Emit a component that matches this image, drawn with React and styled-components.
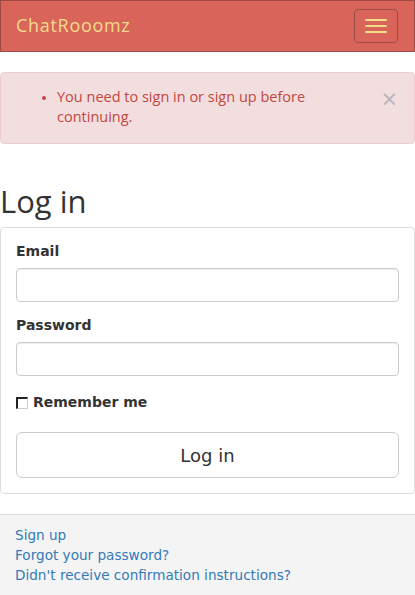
import React from "react";
import styled, { createGlobalStyle } from "styled-components";

const GlobalStyle = createGlobalStyle`
  html, body {
    margin: 0;
    padding: 0;
    background: #fff;
  }
  body {
    font-family: "DejaVu Sans", Verdana, sans-serif;
    font-size: 14px;
    line-height: 1.42857;
    color: #333;
  }
  * {
    box-sizing: border-box;
  }
`;

const Navbar = styled.nav`
  height: 52px;
  background-color: #d9645a;
  border: 1px solid #a04a44;
  display: flex;
  align-items: center;
  justify-content: space-between;
  padding: 0 16px 0 15px;
`;

const Brand = styled.a`
  font-family: "Open Sans", sans-serif;
  font-size: 18px;
  color: #f3dc8a;
  text-decoration: none;
  letter-spacing: 0.7px;
`;

const Toggle = styled.button`
  width: 44px;
  height: 34px;
  border: 1px solid #9b4c46;
  border-radius: 4px;
  background: transparent;
  display: flex;
  flex-direction: column;
  align-items: center;
  justify-content: center;
  gap: 4px;
  padding: 0;
  cursor: pointer;
`;

const Bar = styled.span`
  display: block;
  width: 22px;
  height: 2px;
  background: #f3dc8a;
  border-radius: 1px;
`;

const Alert = styled.div`
  margin-top: 20px;
  background-color: #f2dede;
  border: 1px solid #ebccd1;
  border-radius: 4px;
  color: #c4473f;
  display: flex;
  align-items: flex-start;
  padding: 14px 14px 14px 0;
  min-height: 72px;
`;

const AlertList = styled.ul`
  flex: 1;
  margin: 0;
  padding-left: 56px;
  font-family: "Open Sans", sans-serif;
  font-size: 14.5px;
  line-height: 20px;

  li::marker {
    font-size: 12px;
  }
`;

const Close = styled.button`
  border: none;
  background: transparent;
  color: #b5b5b5;
  font-size: 21px;
  line-height: 1;
  padding: 0;
  margin: 2px 2px 0 20px;
  font-family: "DejaVu Sans", sans-serif;
  cursor: pointer;
`;

const Title = styled.h2`
  font-family: "Open Sans", sans-serif;
  font-weight: 400;
  font-size: 31px;
  color: #333;
  margin: 40px 0 9px;
  line-height: 1.1;
`;

const Card = styled.form`
  border: 1px solid #ddd;
  border-radius: 4px;
  padding: 14px 15px 15px;
  display: flex;
  flex-direction: column;
`;

const Label = styled.label`
  font-weight: bold;
  font-size: 14px;
  display: block;
  margin-bottom: 6px;
`;

const Field = styled.div`
  margin-bottom: 14px;
`;

const Input = styled.input`
  display: block;
  width: 100%;
  height: 34px;
  border: 1px solid #ccc;
  border-radius: 4px;
  box-shadow: inset 0 1px 1px rgba(0, 0, 0, 0.075);
  padding: 6px 12px;
  font-size: 14px;
`;

const CheckRow = styled.label`
  display: flex;
  align-items: center;
  font-weight: bold;
  font-size: 14px;
  margin: 3px 0 19px;
`;

const Box = styled.span`
  width: 12px;
  height: 12px;
  border-top: 2px solid #222;
  border-left: 2px solid #222;
  border-right: 1px solid #ccc;
  border-bottom: 1px solid #ccc;
  margin-right: 5px;
  background: #fff;
`;

const Submit = styled.button`
  width: 100%;
  height: 46px;
  border: 1px solid #ccc;
  border-radius: 6px;
  background: #fff;
  color: #333;
  font-family: "DejaVu Sans", sans-serif;
  font-size: 18px;
  cursor: pointer;
`;

const Footer = styled.footer`
  margin-top: 20px;
  background: #f4f4f4;
  border-top: 1px solid #ddd;
  padding: 10px 15px 12px;
  display: flex;
  flex-direction: column;
`;

const FooterLink = styled.a`
  color: #337ab7;
  text-decoration: none;
  font-size: 13.6px;
  line-height: 20px;
`;

export default function App() {
  return (
    <>
      <GlobalStyle />
      <Navbar>
        <Brand href="#">ChatRooomz</Brand>
        <Toggle type="button" aria-label="Toggle navigation">
          <Bar />
          <Bar />
          <Bar />
        </Toggle>
      </Navbar>
      <Alert>
        <AlertList>
          <li>You need to sign in or sign up before continuing.</li>
        </AlertList>
        <Close type="button">×</Close>
      </Alert>
      <Title>Log in</Title>
      <Card onSubmit={(e) => e.preventDefault()}>
        <Field>
          <Label htmlFor="email">Email</Label>
          <Input id="email" type="email" />
        </Field>
        <Field>
          <Label htmlFor="password">Password</Label>
          <Input id="password" type="password" />
        </Field>
        <CheckRow>
          <Box />
          Remember me
        </CheckRow>
        <Submit type="submit">Log in</Submit>
      </Card>
      <Footer>
        <FooterLink href="#">Sign up</FooterLink>
        <FooterLink href="#">Forgot your password?</FooterLink>
        <FooterLink href="#">Didn't receive confirmation instructions?</FooterLink>
      </Footer>
    </>
  );
}
